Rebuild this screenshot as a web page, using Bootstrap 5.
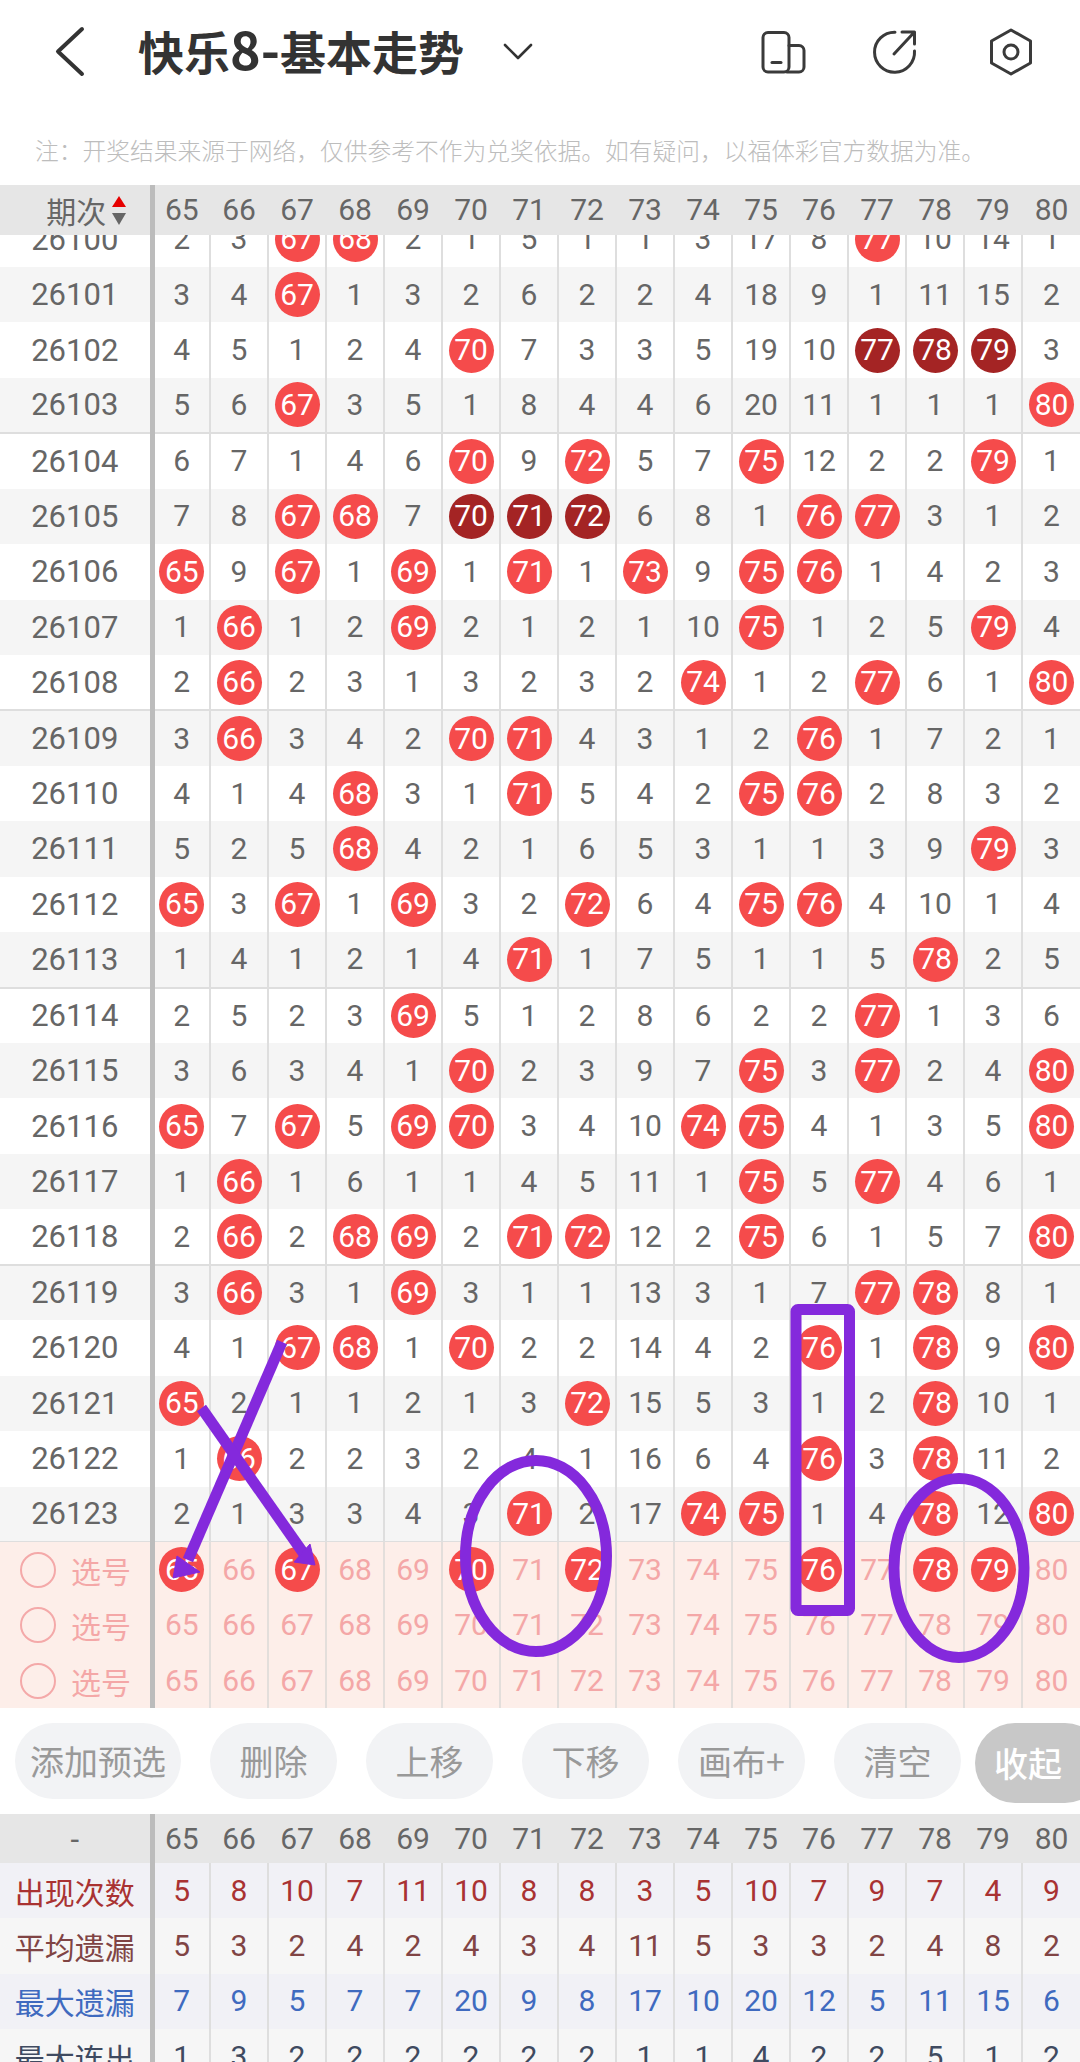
<!DOCTYPE html>
<html lang="zh-CN">
<head>
  <meta charset="UTF-8">
  <meta name="viewport" content="width=device-width, initial-scale=1.0">
  <title>快乐8-基本走势</title>
  <link href="https://cdn.jsdelivr.net/npm/bootstrap@5.3.0/dist/css/bootstrap.min.css" rel="stylesheet">
  <style>
    html, body { height: 100%; }
    body { width: 1080px; height: 2062px; overflow: hidden; position: relative; background: #fff;
      font-family: Roboto, "Noto Sans CJK SC", sans-serif; color: #666; }
    .top-row { height: 104px; padding-left: 52px; }
    .page-name { margin: 0 0 8px 50px; font: 700 46px/1 "Noto Sans CJK SC", sans-serif; color: #333; }
    .page-name span { font-size: 52px; }
    .name-caret { margin-left: 39px; }
    .ic-a { margin-left: auto; }
    .ic-b { margin-left: 63px; }
    .ic-c { margin-left: 69px; margin-right: 45px; }
    .note-row { height: 81px; padding: 34px 0 0 35px; font: 300 23.75px/1 "Noto Sans CJK SC", sans-serif; color: #bdbdbd; white-space: nowrap; }

    .trend-tb { width: 1080px; table-layout: fixed; border-collapse: collapse; margin: 0; font-size: 30px; }
    .trend-tb td { padding: 0; height: 55.45px; line-height: 1; text-align: center; vertical-align: middle; color: #666;
      background: #fff; border: 0; border-right: 2px solid #dedede; box-shadow: none; }
    .trend-tb td:first-child { width: 152px; border-right: 5px solid #bcbcbc; font-size: 31px; }
    .trend-tb td:last-child { border-right: 0; }
    .trend-tb tr:nth-child(even) td { background: #f5f5f5; }
    .trend-tb tr.five-end td { border-bottom: 2px solid #dedede; }

    .tb-head td, .trend-tb .tb-head td { height: 50px; background: #e6e6e6; border-right-color: #e6e6e6; }
    .tb-head td:first-child { border-right-color: #bcbcbc; }
    .sort-cell { padding-left: 23px; }
    .sort-lbl { font: 400 30px/1 "Noto Sans CJK SC", sans-serif; color: #666; }
    .sort-arrows { gap: 6px; margin-left: 6px; }
    .scroll-box { height: 1307px; overflow: hidden; }
    .scroll-box .trend-tb { margin-top: -23.55px; }

    .ball { width: 45px; height: 45px; background: #f54b4b; color: #fff; }
    .ball.hot { background: #a42424; }

    .pick-tb td, .trend-tb.pick-tb tr td { background: #fdeee9; color: #f4a7a7; border-right-color: #e3dedb; }
    .trend-tb.pick-tb tr td:first-child { border-right-color: #bcbcbc; text-align: left; padding-left: 20px; font: 400 30px/1 "Noto Sans CJK SC", sans-serif; }
    .pick-ring { width: 36px; height: 36px; border: 2.5px solid #f4a9a9; margin-right: 15px; flex: none; }
    .trend-tb.pick-tb .ball { color: #fff; }

    .act-row { height: 106px; padding: 15px 0 0 15px; gap: 29px; align-items: flex-start; overflow: hidden; }
    .act-btn { height: 76px; width: 127px; flex: none; padding: 0; border: 0; background: #f2f3f5; color: #999;
      font: 400 34px/70px "Noto Sans CJK SC", sans-serif; }
    .act-btn.wide { width: 166px; }
    .act-btn.fold { width: 130px; height: 80px; margin-left: -15px; background: #c8c8c8; color: #fff; font-weight: 500; line-height: 80px; text-align: left; padding-left: 19px; }

    .stat-tb { margin-top: -1.5px; }
    .trend-tb.stat-tb tr.r1 td { background: #f1f1f6; color: #a93232; }
    .trend-tb.stat-tb tr.r2 td { background: #f6f6f6; color: #804444; }
    .trend-tb.stat-tb tr.r3 td { background: #f1f1f6; color: #3f6abf; }
    .trend-tb.stat-tb tr.r4 td { background: #f6f6f6; color: #3f4a60; }
    .trend-tb.stat-tb tr td:first-child { font: 400 30px/1 "Noto Sans CJK SC", sans-serif; }

    .marks { position: absolute; left: 0; top: 0; pointer-events: none; }
  </style>
</head>
<body>
  <!-- 标题栏 -->
  <div class="top-row d-flex align-items-center">
    <svg width="36" height="52" viewBox="52 26 36 52" fill="none" stroke="#333" stroke-width="4" stroke-linecap="round" stroke-linejoin="round"><path d="M82 29 58 51.500 82 74"/></svg>
    <h1 class="page-name">快乐<span>8-</span>基本走势</h1>
    <svg class="name-caret" width="30" height="18" viewBox="504 44 30 18" fill="none" stroke="#333" stroke-width="2.600" stroke-linecap="round" stroke-linejoin="round"><path d="M506 46 519 59 532 46"/></svg>
    <svg class="ic-a" width="48" height="48" viewBox="759 29 48 48" fill="none" stroke="#3a3a3a" stroke-width="3" stroke-linecap="round" stroke-linejoin="round">
      <rect x="763" y="33.500" width="26" height="39.500" rx="5"/>
      <path d="M789 46.500h10a5 5 0 0 1 5 5V68a5 5 0 0 1-5 5H787"/>
      <path d="M772 63.500h9"/>
    </svg>
    <svg class="ic-b" width="48" height="48" viewBox="870 29 48 48" fill="none" stroke="#3a3a3a" stroke-width="3" stroke-linecap="round" stroke-linejoin="round">
      <path d="M895 33.200A20 20 0 1 0 914.500 52"/>
      <path d="M894 55 914 33.500M902 33h12.500V45"/>
    </svg>
    <svg class="ic-c" width="48" height="48" viewBox="987 29 48 48" fill="none" stroke="#3a3a3a" stroke-width="3" stroke-linecap="round" stroke-linejoin="round">
      <path d="M1011 31 1030.500 42V64L1011 75 991.500 64V42Z"/>
      <circle cx="1011" cy="53" r="7"/>
    </svg>
  </div>
  <div class="note-row">注：开奖结果来源于网络，仅供参考不作为兑奖依据。如有疑问，以福体彩官方数据为准。</div>

  <table class="table trend-tb tb-head"><tbody id="topHead"></tbody></table>
  <div class="scroll-box"><table class="table trend-tb"><tbody id="trendBody"></tbody></table></div>
  <table class="table trend-tb pick-tb"><tbody id="pickBody"></tbody></table>

  <div class="act-row d-flex">
    <button class="btn act-btn wide rounded-pill">添加预选</button>
    <button class="btn act-btn rounded-pill">删除</button>
    <button class="btn act-btn rounded-pill">上移</button>
    <button class="btn act-btn rounded-pill">下移</button>
    <button class="btn act-btn rounded-pill">画布+</button>
    <button class="btn act-btn rounded-pill">清空</button>
    <button class="btn act-btn fold rounded-pill">收起</button>
  </div>

  <table class="table trend-tb tb-head"><tbody id="statHead"></tbody></table>
  <table class="table trend-tb stat-tb"><tbody id="statBody"></tbody></table>

  <!-- 手画标记 -->
  <svg class="marks" width="1080" height="2062" fill="none" stroke="#8429dc">
    <path d="M282 1342 188 1560" stroke-width="11"/>
    <polygon points="173,1578 177,1556 200,1572" fill="#8429dc" stroke-width="1"/>
    <path d="M201.500 1408 304 1554" stroke-width="11"/>
    <polygon points="315,1565 310,1544 294,1562" fill="#8429dc" stroke-width="1"/>
    <ellipse cx="536" cy="1556" rx="70.500" ry="95.500" stroke-width="11"/>
    <rect x="796" y="1309.500" width="53.500" height="301" rx="2" stroke-width="11"/>
    <ellipse cx="959" cy="1568" rx="65" ry="89.500" stroke-width="11"/>
  </svg>

  <script>
    // x = 当期开出, d = 连号深色
    const rows = [
      '2 3 x x 2 1 5 1 1 3 17 8 x 10 14 1',
      '3 4 x 1 3 2 6 2 2 4 18 9 1 11 15 2',
      '4 5 1 2 4 x 7 3 3 5 19 10 d d d 3',
      '5 6 x 3 5 1 8 4 4 6 20 11 1 1 1 x',
      '6 7 1 4 6 x 9 x 5 7 x 12 2 2 x 1',
      '7 8 x x 7 d d d 6 8 1 x x 3 1 2',
      'x 9 x 1 x 1 x 1 x 9 x x 1 4 2 3',
      '1 x 1 2 x 2 1 2 1 10 x 1 2 5 x 4',
      '2 x 2 3 1 3 2 3 2 x 1 2 x 6 1 x',
      '3 x 3 4 2 x x 4 3 1 2 x 1 7 2 1',
      '4 1 4 x 3 1 x 5 4 2 x x 2 8 3 2',
      '5 2 5 x 4 2 1 6 5 3 1 1 3 9 x 3',
      'x 3 x 1 x 3 2 x 6 4 x x 4 10 1 4',
      '1 4 1 2 1 4 x 1 7 5 1 1 5 x 2 5',
      '2 5 2 3 x 5 1 2 8 6 2 2 x 1 3 6',
      '3 6 3 4 1 x 2 3 9 7 x 3 x 2 4 x',
      'x 7 x 5 x x 3 4 10 x x 4 1 3 5 x',
      '1 x 1 6 1 1 4 5 11 1 x 5 x 4 6 1',
      '2 x 2 x x 2 x x 12 2 x 6 1 5 7 x',
      '3 x 3 1 x 3 1 1 13 3 1 7 x x 8 1',
      '4 1 x x 1 x 2 2 14 4 2 x 1 x 9 x',
      'x 2 1 1 2 1 3 x 15 5 3 1 2 x 10 1',
      '1 x 2 2 3 2 4 1 16 6 4 x 3 x 11 2',
      '2 1 3 3 4 3 x 2 17 x x 1 4 x 12 x'
    ];
    const stats = [
      ['出现次数', '5 8 10 7 11 10 8 8 3 5 10 7 9 7 4 9'],
      ['平均遗漏', '5 3 2 4 2 4 3 4 11 5 3 3 2 4 8 2'],
      ['最大遗漏', '7 9 5 7 7 20 9 8 17 10 20 12 5 11 15 6'],
      ['最大连出', '1 3 2 2 2 2 2 2 1 1 4 2 2 5 1 2']
    ];
    const ballCls = 'ball rounded-circle d-inline-flex align-items-center justify-content-center';
    const nums = Array.from({length: 16}, (_, i) => 65 + i);
    const headCells = nums.map(n => `<td>${n}</td>`).join('');

    function ballCell(n, hot) {
      return `<td><span class="${ballCls}${hot ? ' hot' : ''}">${n}</span></td>`;
    }

    document.getElementById('topHead').innerHTML = `<tr><td><span class="sort-cell d-flex align-items-center justify-content-center"><span class="sort-lbl">期次</span><span class="sort-arrows d-flex flex-column">
      <svg width="14" height="11" viewBox="0 0 14 11" class="d-block"><path d="M7 0 14 11H0Z" fill="#e60000"/></svg>
      <svg width="14" height="12" viewBox="0 0 14 12" class="d-block"><path d="M0 0H14L7 12Z" fill="#666"/></svg></span></span></td>${headCells}</tr>`;
    document.getElementById('statHead').innerHTML = `<tr><td>-</td>${headCells}</tr>`;

    document.getElementById('trendBody').innerHTML = rows.map((r, i) => {
      const issue = 26100 + i;
      const tds = r.split(' ').map((v, c) => v === 'x' ? ballCell(nums[c]) : v === 'd' ? ballCell(nums[c], true) : `<td>${v}</td>`).join('');
      return `<tr class="${issue % 5 === 3 ? 'five-end' : ''}"><td>${issue}</td>${tds}</tr>`;
    }).join('');

    const picked = [65, 67, 70, 72, 76, 78, 79];
    document.getElementById('pickBody').innerHTML = [0, 1, 2].map(i => {
      const tds = nums.map(n => i === 0 && picked.includes(n) ? ballCell(n) : `<td>${n}</td>`).join('');
      return `<tr><td><span class="d-flex align-items-center"><span class="pick-ring rounded-circle"></span>选号</span></td>${tds}</tr>`;
    }).join('');

    document.getElementById('statBody').innerHTML = stats.map((s, i) =>
      `<tr class="r${i + 1}"><td>${s[0]}</td>${s[1].split(' ').map(v => `<td>${v}</td>`).join('')}</tr>`).join('');
  </script>
  <script src="https://cdn.jsdelivr.net/npm/bootstrap@5.3.0/dist/js/bootstrap.bundle.min.js"></script>
</body>
</html>
